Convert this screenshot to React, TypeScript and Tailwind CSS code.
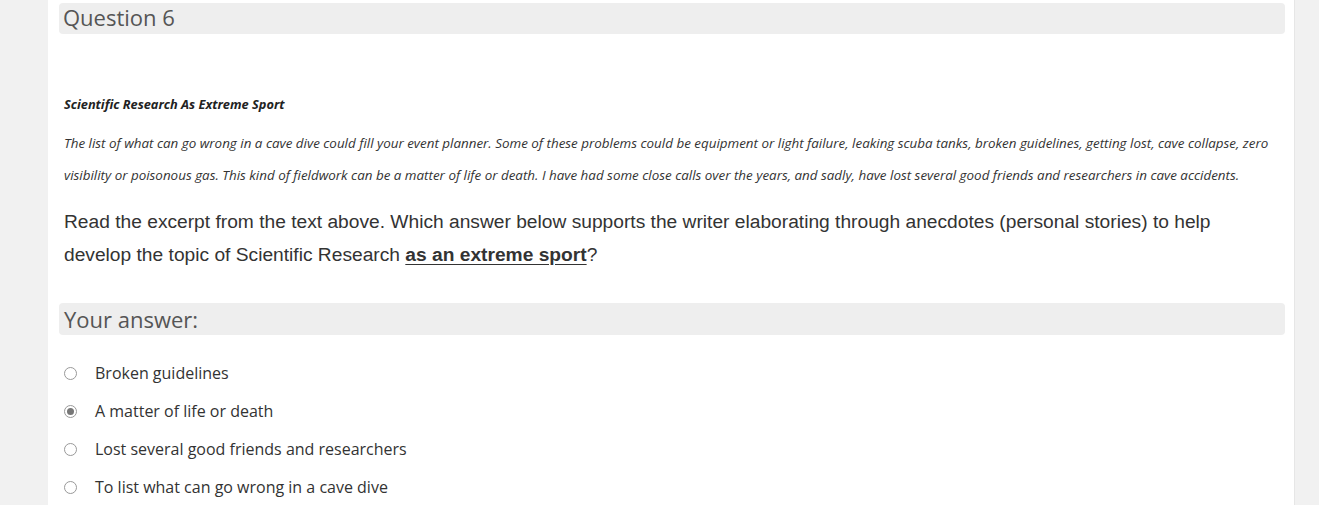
export default function App() {
  const options = [
    "Broken guidelines",
    "A matter of life or death",
    "Lost several good friends and researchers",
    "To list what can go wrong in a cave dive",
  ];
  return (
    <div className="w-[1319px] h-[505px] overflow-hidden bg-[#f1f1f1] flex">
      <div className="ml-[48px] w-[1246px] bg-white pl-[11px] pr-[9px] pt-[3px] h-full">
        <div className="h-[31px] rounded-[4px] bg-[#eeeeee] flex items-center px-[4px] pb-[4px] text-[22px] text-[#555] font-['Open_Sans',sans-serif] leading-none">
          Question 6
        </div>
        <div className="px-[5px] pt-[62px]">
          <p className="font-['Open_Sans',sans-serif] italic font-bold text-[12.8px] text-[#222] leading-[16px]">
            Scientific Research As Extreme Sport
          </p>
          <p className="mt-[15px] font-['Open_Sans',sans-serif] italic text-[13.4px] text-[#333] leading-[32px] whitespace-nowrap">
            The list of what can go wrong in a cave dive could fill your event planner. Some of these problems could be equipment or light failure, leaking scuba tanks, broken guidelines, getting lost, cave collapse, zero
            <br />
            visibility or poisonous gas. This kind of fieldwork can be a matter of life or death. I have had some close calls over the years, and sadly, have lost several good friends and researchers in cave accidents.
          </p>
          <p className="mt-[14px] font-['Liberation_Sans',Arial,sans-serif] text-[19.2px] text-[#333] leading-[33px]">
            Read the excerpt from the text above. Which answer below supports the writer elaborating through anecdotes (personal stories) to help
            <br />
            develop the topic of Scientific Research{" "}
            <span className="font-bold underline underline-offset-[3px]">as an extreme sport</span>?
          </p>
        </div>
        <div className="mt-[32px] h-[32px] rounded-[4px] bg-[#eeeeee] flex items-center px-[5px] text-[22px] text-[#555] font-['Open_Sans',sans-serif] leading-none">
          Your answer:
        </div>
        <div className="mt-[27px] px-[5px] flex flex-col gap-[16px]">
          {options.map((o, i) => (
            <div key={o} className="flex items-center h-[22px]">
              <span className="w-[13px] h-[13px] rounded-full border border-[#999] bg-white flex items-center justify-center">
                {i === 1 && <span className="w-[7px] h-[7px] rounded-full bg-[#777]" />}
              </span>
              <span className="ml-[18px] font-['Open_Sans',sans-serif] text-[16px] text-[#333]">{o}</span>
            </div>
          ))}
        </div>
      </div>
      <div className="w-px bg-[#e6e6e6]" />
    </div>
  );
}
